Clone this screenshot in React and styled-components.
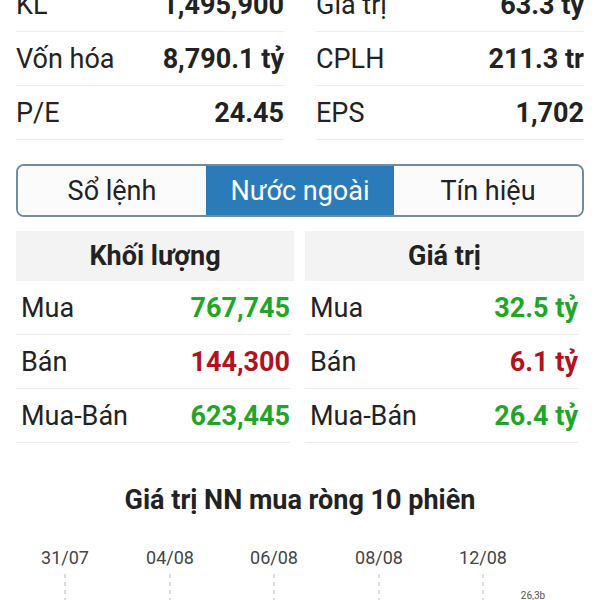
import styled, { createGlobalStyle } from "styled-components";

const GlobalStyle = createGlobalStyle`
  html, body {
    margin: 0;
    padding: 0;
    background: #ffffff;
    font-family: Roboto, "Noto Sans", sans-serif;
    color: #222222;
  }
`;

const stats = [
  ["KL", "1,495,900", "Giá trị", "63.3 tỷ"],
  ["Vốn hóa", "8,790.1 tỷ", "CPLH", "211.3 tr"],
  ["P/E", "24.45", "EPS", "1,702"],
];

const foreign = [
  { label: "Mua", vol: "767,745", val: "32.5 tỷ", tone: "up" },
  { label: "Bán", vol: "144,300", val: "6.1 tỷ", tone: "down" },
  { label: "Mua-Bán", vol: "623,445", val: "26.4 tỷ", tone: "up" },
];

const dates = [
  ["31/07", 65],
  ["04/08", 170],
  ["06/08", 274],
  ["08/08", 379],
  ["12/08", 483],
];

export default function App() {
  return (
    <>
      <GlobalStyle />
      <Page>
        <Stats>
          {stats.flatMap(([l1, v1, l2, v2]) => [
            <StatRow key={l1}>
              <span>{l1}</span>
              <b>{v1}</b>
            </StatRow>,
            <StatRow key={l2}>
              <span>{l2}</span>
              <b>{v2}</b>
            </StatRow>,
          ])}
        </Stats>

        <Tabs>
          <Tab>Sổ lệnh</Tab>
          <Tab active>Nước ngoài</Tab>
          <Tab>Tín hiệu</Tab>
        </Tabs>

        <Tables>
          <Table>
            <TableHead>Khối lượng</TableHead>
            {foreign.map((r) => (
              <Row key={r.label}>
                <span>{r.label}</span>
                <Value tone={r.tone}>{r.vol}</Value>
              </Row>
            ))}
          </Table>
          <Table right>
            <TableHead>Giá trị</TableHead>
            {foreign.map((r) => (
              <Row key={r.label}>
                <span>{r.label}</span>
                <Value tone={r.tone}>{r.val}</Value>
              </Row>
            ))}
          </Table>
        </Tables>

        <ChartTitle>Giá trị NN mua ròng 10 phiên</ChartTitle>

        <Chart width="600" height="80" viewBox="0 0 600 80">
          {dates.map(([d, x]) => (
            <g key={d}>
              <text x={x} y="27" textAnchor="middle" fontSize="18" fill="#444" fontFamily="Roboto, sans-serif">
                {d}
              </text>
              <line x1={x} y1="37" x2={x} y2="80" stroke="#bbb" strokeWidth="1" strokeDasharray="4 4" />
            </g>
          ))}
          <text x="533" y="62" textAnchor="middle" fontSize="10" fill="#555" fontFamily="Roboto, sans-serif">
            26,3b
          </text>
        </Chart>
      </Page>
    </>
  );
}

const Page = styled.div`
  width: 600px;
  height: 600px;
  overflow: hidden;
  box-sizing: border-box;
  padding: 0 16px;
`;

const Stats = styled.div`
  display: grid;
  grid-template-columns: 1fr 1fr;
  column-gap: 32px;
  margin-top: -22px;
`;

const StatRow = styled.div`
  display: flex;
  justify-content: space-between;
  align-items: center;
  height: 53px;
  border-bottom: 1px solid #ececec;
  font-size: 27px;
  span {
    color: #222;
  }
  b {
    font-weight: 700;
    color: #222;
  }
`;

const Tabs = styled.div`
  display: flex;
  margin-top: 24px;
  height: 53px;
  border: 2px solid #6f8ba6;
  border-radius: 8px;
  overflow: hidden;
  box-sizing: border-box;
`;

const Tab = styled.div`
  flex: 1;
  display: flex;
  align-items: center;
  justify-content: center;
  font-size: 27px;
  background: ${(p) => (p.active ? "#2b7bb9" : "#fbfbfb")};
  color: ${(p) => (p.active ? "#ffffff" : "#222")};
`;

const Tables = styled.div`
  display: grid;
  grid-template-columns: 278px 1fr;
  column-gap: 11px;
  margin-top: 14px;
`;

const Table = styled.div`
  display: flex;
  flex-direction: column;
  padding-right: ${(p) => (p.right ? "6px" : "4px")};
  & > div:first-child {
    margin-right: ${(p) => (p.right ? "-6px" : "-4px")};
  }
`;

const TableHead = styled.div`
  height: 50px;
  display: flex;
  align-items: center;
  justify-content: center;
  background: #f3f3f3;
  font-size: 27px;
  font-weight: 700;
  color: #222;
`;

const Row = styled.div`
  display: flex;
  justify-content: space-between;
  align-items: center;
  height: 53px;
  padding-left: 5px;
  border-bottom: 1px solid #ececec;
  font-size: 27px;
  span {
    color: #222;
  }
`;

const Value = styled.b`
  font-weight: 700;
  color: ${(p) => (p.tone === "down" ? "#b3111c" : "#22a526")};
`;

const ChartTitle = styled.div`
  margin-top: 42px;
  text-align: center;
  font-size: 27px;
  font-weight: 700;
  color: #222;
  line-height: 30px;
`;

const Chart = styled.svg`
  display: block;
  margin: 22px -16px 0;
`;
